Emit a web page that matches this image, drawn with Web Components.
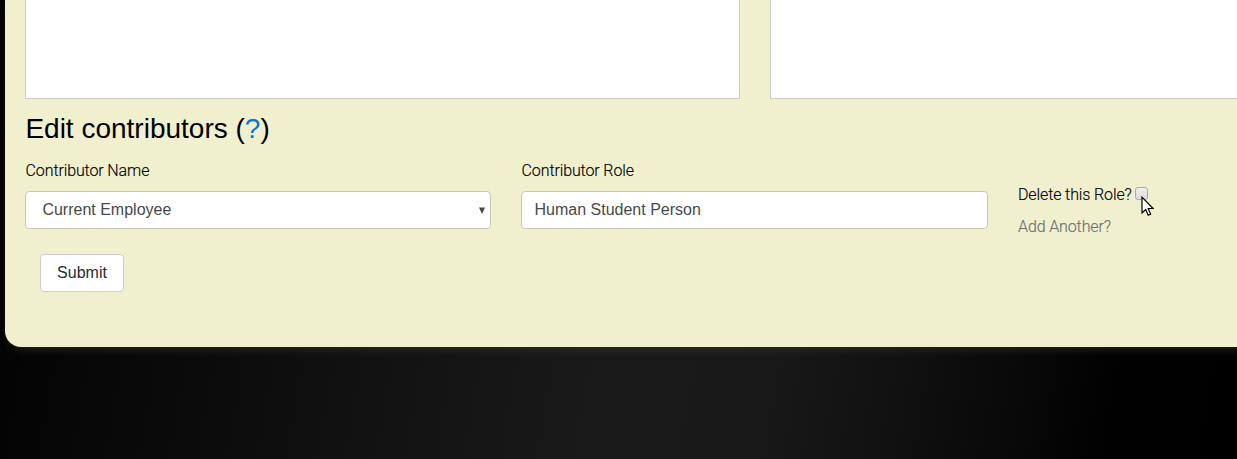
<!DOCTYPE html>
<html lang="en"><head><meta charset="utf-8"><title>Edit contributors</title>
<style>html,body{margin:0;height:100%;overflow:hidden;background:#000}</style></head>
<body>
<app-page>
  <form-panel>
    <text-boxes></text-boxes>
    <section-title></section-title>
    <contributor-row>
      <form-field label="Contributor Name"><select-box>Current Employee</select-box></form-field>
      <form-field label="Contributor Role"><text-input>Human Student Person</text-input></form-field>
      <role-actions></role-actions>
    </contributor-row>
    <submit-button>Submit</submit-button>
  </form-panel>
</app-page>
<script>
const define = (name, html) => {
  const t = document.createElement('template');
  t.innerHTML = html;
  customElements.define(name, class extends HTMLElement {
    constructor() {
      super();
      this.attachShadow({mode: 'open'}).append(t.content.cloneNode(true));
    }
    connectedCallback() {
      const l = this.shadowRoot.querySelector('[data-label]');
      if (l) l.textContent = this.getAttribute('label');
    }
  });
};
define('app-page', `<style>
:host{display:block;box-sizing:border-box;height:459px;padding-left:5px;overflow:hidden;color:#000;
font:16px/24px "Liberation Sans",Arial,sans-serif;
background:linear-gradient(100deg,#020202 0,#090909 16%,#0f0f0f 28%,#161616 42%,#1a1a1a 52%,#181818 64%,#111 73%,#090909 82%,#010101 90%,#000 100%)}
</style><slot></slot>`);
define('form-panel', `<style>
:host{display:block;box-sizing:border-box;width:1500px;height:347px;padding-left:20px;background:#f0efce;
border-radius:0 0 0 16px;box-shadow:3px 3px 8px rgba(60,60,60,.5)}
</style><slot></slot>`);
define('text-boxes', `<style>
:host{display:flex;gap:30px;height:99px}
div{box-sizing:border-box;width:715px;flex:none;background:#fff;border:1px solid #ccc;border-top:0}
</style><div></div><div></div>`);
define('section-title', `<style>
:host{display:block;padding-top:14px}
h3{margin:0;padding-left:.4px;font-size:28px;line-height:31px;font-weight:400}
a{color:#0275d8;text-decoration:none}
</style><h3>Edit contributors (<a>?</a>)</h3>`);
define('contributor-row', `<style>
:host{display:grid;grid-template-columns:466px 467px 300px;gap:30px;padding-top:14px;height:71px}
</style><slot></slot>`);
const light = 'font-family:Roboto,sans-serif;font-weight:300;letter-spacing:-.12px;-webkit-text-stroke:.15px currentColor';
define('form-field', `<style>
:host{display:block}
label{display:block;box-sizing:border-box;height:33px;padding:1px 0 0 .6px;${light}}
</style><label data-label></label><slot></slot>`);
const field = 'box-sizing:border-box;height:38px;border:1px solid #c9c9b0;border-radius:4px;background:#fff;color:#464a4c;line-height:36px';
define('select-box', `<style>
:host{display:flex;justify-content:space-between;align-items:center;padding:0 5px 0 16.4px;${field}}
svg{display:block;flex:none}
</style><span><slot></slot></span><svg width="6" height="7" viewBox="0 0 6 7"><path d="M0 .5h6L3 7z" fill="#464a4c"/></svg>`);
define('text-input', `<style>
:host{display:block;padding:0 12.5px;${field}}
</style><slot></slot>`);
define('role-actions', `<style>
:host{display:block;padding-top:25px;${light}}
.line{display:flex;height:32px}
.text{width:114px;white-space:nowrap}
.box{position:relative;box-sizing:border-box;width:13px;height:13px;margin:4px 0 0 3px;border:1px solid #aaa;border-radius:3px;background:linear-gradient(#eee,#dcdcdc)}
svg{position:absolute;left:5px;top:8px}
a{color:#6b7074}
</style><div class="line"><span class="text">Delete this Role?</span><span class="box"><svg width="13" height="21" viewBox="0 0 13 21"><path d="M1 1.2V17l3.7-3.4 2.5 5.6 2.4-1.1L7.2 12.5h4.9z" fill="#fff" stroke="#000" stroke-width="1.2"/></svg></span></div><a>Add Another?</a>`);
define('submit-button', `<style>
:host{display:block;padding:25px 0 0 15px}
button{display:block;box-sizing:border-box;width:84px;height:38px;padding:0;border:1px solid #ccc;border-radius:4px;background:#fff;color:#292b2c;font:inherit}
</style><button><slot></slot></button>`);
</script>
</body></html>
